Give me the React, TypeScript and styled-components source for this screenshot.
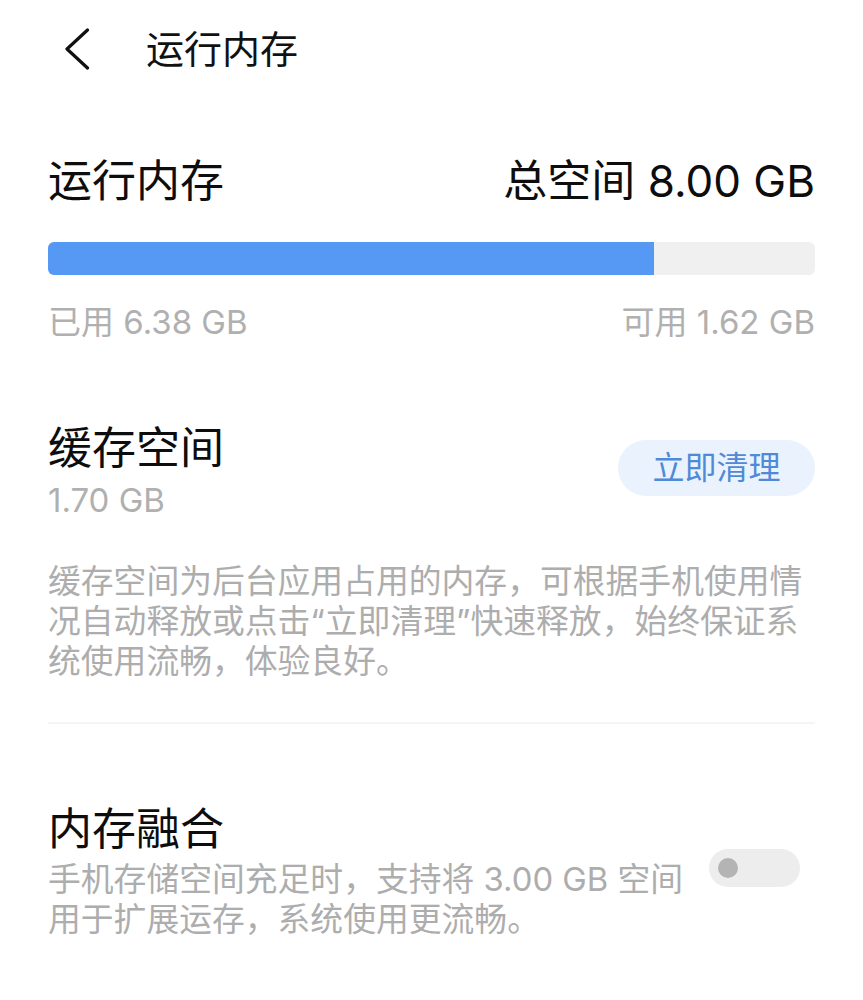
import React from "react";
import styled, { createGlobalStyle } from "styled-components";

const FONT = `"Inter", "Noto Sans CJK SC", sans-serif`;

const GlobalStyle = createGlobalStyle`
  html, body {
    margin: 0;
    padding: 0;
    background: #ffffff;
  }
  body {
    font-family: ${FONT};
    color: #000000;
    -webkit-font-smoothing: antialiased;
  }
`;

const Page = styled.div`
  width: 863px;
  box-sizing: border-box;
  padding: 0 48px 40px;
  display: flex;
  flex-direction: column;
`;

const Header = styled.header`
  height: 97px;
  display: flex;
  align-items: center;
  gap: 56px;
  padding-left: 16px;
`;

const BackButton = styled.button`
  border: 0;
  background: transparent;
  padding: 0;
  display: flex;
  align-items: center;
  color: #111111;
  cursor: pointer;
`;

const HeaderTitle = styled.h1`
  margin: 0;
  font-size: 38px;
  line-height: 50px;
  font-weight: 400;
  color: #111111;
`;

const TitleRow = styled.div`
  margin-top: 54px;
  height: 60px;
  display: flex;
  justify-content: space-between;
  align-items: center;
`;

const SectionTitle = styled.h2`
  margin: 0;
  font-size: 44px;
  line-height: 56px;
  font-weight: 400;
  color: #0d0d0d;
`;

const Bar = styled.div`
  margin-top: 31px;
  height: 33px;
  border-radius: 6px;
  background: #f0f0f0;
  overflow: hidden;
  display: flex;
`;

const BarFill = styled.div`
  height: 100%;
  background: #5599f4;
`;

const LabelRow = styled.div`
  margin-top: 25px;
  display: flex;
  justify-content: space-between;
`;

const GreyText = styled.span`
  font-size: 33px;
  line-height: 44px;
  color: #b0b0b0;
`;

const CacheRow = styled.div`
  margin-top: 76px;
  display: flex;
  justify-content: space-between;
  align-items: flex-start;
`;

const Column = styled.div`
  display: flex;
  flex-direction: column;
`;

const Value = styled(GreyText)`
  margin-top: 2px;
`;

const CleanButton = styled.button`
  margin-top: 20px;
  width: 197px;
  height: 56px;
  border: 0;
  border-radius: 28px;
  background: #eaf2fd;
  color: #4f8ad8;
  font-family: ${FONT};
  font-size: 32px;
  line-height: 56px;
  padding: 0;
  cursor: pointer;
`;

const Description = styled.p<{ $top: number }>`
  margin: ${(p) => p.$top}px 0 0;
  font-size: 32.8px;
  line-height: 40px;
  color: #adadad;
`;

const Divider = styled.hr`
  margin: 41px 0 0;
  border: 0;
  height: 2px;
  background: #f5f5f5;
`;

const FusionRow = styled.div`
  margin-top: 77px;
  display: flex;
  align-items: flex-start;
  gap: 24px;
`;

const FusionText = styled.div`
  flex: 1;
  display: flex;
  flex-direction: column;
`;

const Toggle = styled.div`
  margin-top: 48px;
  margin-right: 15px;
  width: 91px;
  height: 38px;
  border-radius: 19px;
  background: #ededed;
  box-sizing: border-box;
  padding-left: 9px;
  display: flex;
  align-items: center;
  flex-shrink: 0;
`;

const Knob = styled.span`
  width: 20px;
  height: 20px;
  border-radius: 50%;
  background: #b4b4b4;
`;

const usedShare = 0.79;

export default function App() {
  return (
    <>
      <GlobalStyle />
      <Page>
        <Header>
          <BackButton aria-label="返回">
            <svg width="26" height="42" viewBox="0 0 26 42" fill="none">
              <path
                d="M23.5 2 L3 21 L23.5 40"
                stroke="currentColor"
                strokeWidth="3.2"
                strokeLinecap="round"
                strokeLinejoin="round"
              />
            </svg>
          </BackButton>
          <HeaderTitle>运行内存</HeaderTitle>
        </Header>

        <TitleRow>
          <SectionTitle>运行内存</SectionTitle>
          <SectionTitle>总空间 8.00 GB</SectionTitle>
        </TitleRow>

        <Bar>
          <BarFill style={{ width: `${usedShare * 100}%` }} />
        </Bar>

        <LabelRow>
          <GreyText>已用 6.38 GB</GreyText>
          <GreyText>可用 1.62 GB</GreyText>
        </LabelRow>

        <CacheRow>
          <Column>
            <SectionTitle>缓存空间</SectionTitle>
            <Value>1.70 GB</Value>
          </Column>
          <CleanButton>立即清理</CleanButton>
        </CacheRow>

        <Description $top={39}>
          缓存空间为后台应用占用的内存，可根据手机使用情况自动释放或点击“立即清理”快速释放，始终保证系统使用流畅，体验良好。
        </Description>

        <Divider />

        <FusionRow>
          <FusionText>
            <SectionTitle>内存融合</SectionTitle>
            <Description $top={2}>
              手机存储空间充足时，支持将 3.00 GB 空间用于扩展运存，系统使用更流畅。
            </Description>
          </FusionText>
          <Toggle>
            <Knob />
          </Toggle>
        </FusionRow>
      </Page>
    </>
  );
}
